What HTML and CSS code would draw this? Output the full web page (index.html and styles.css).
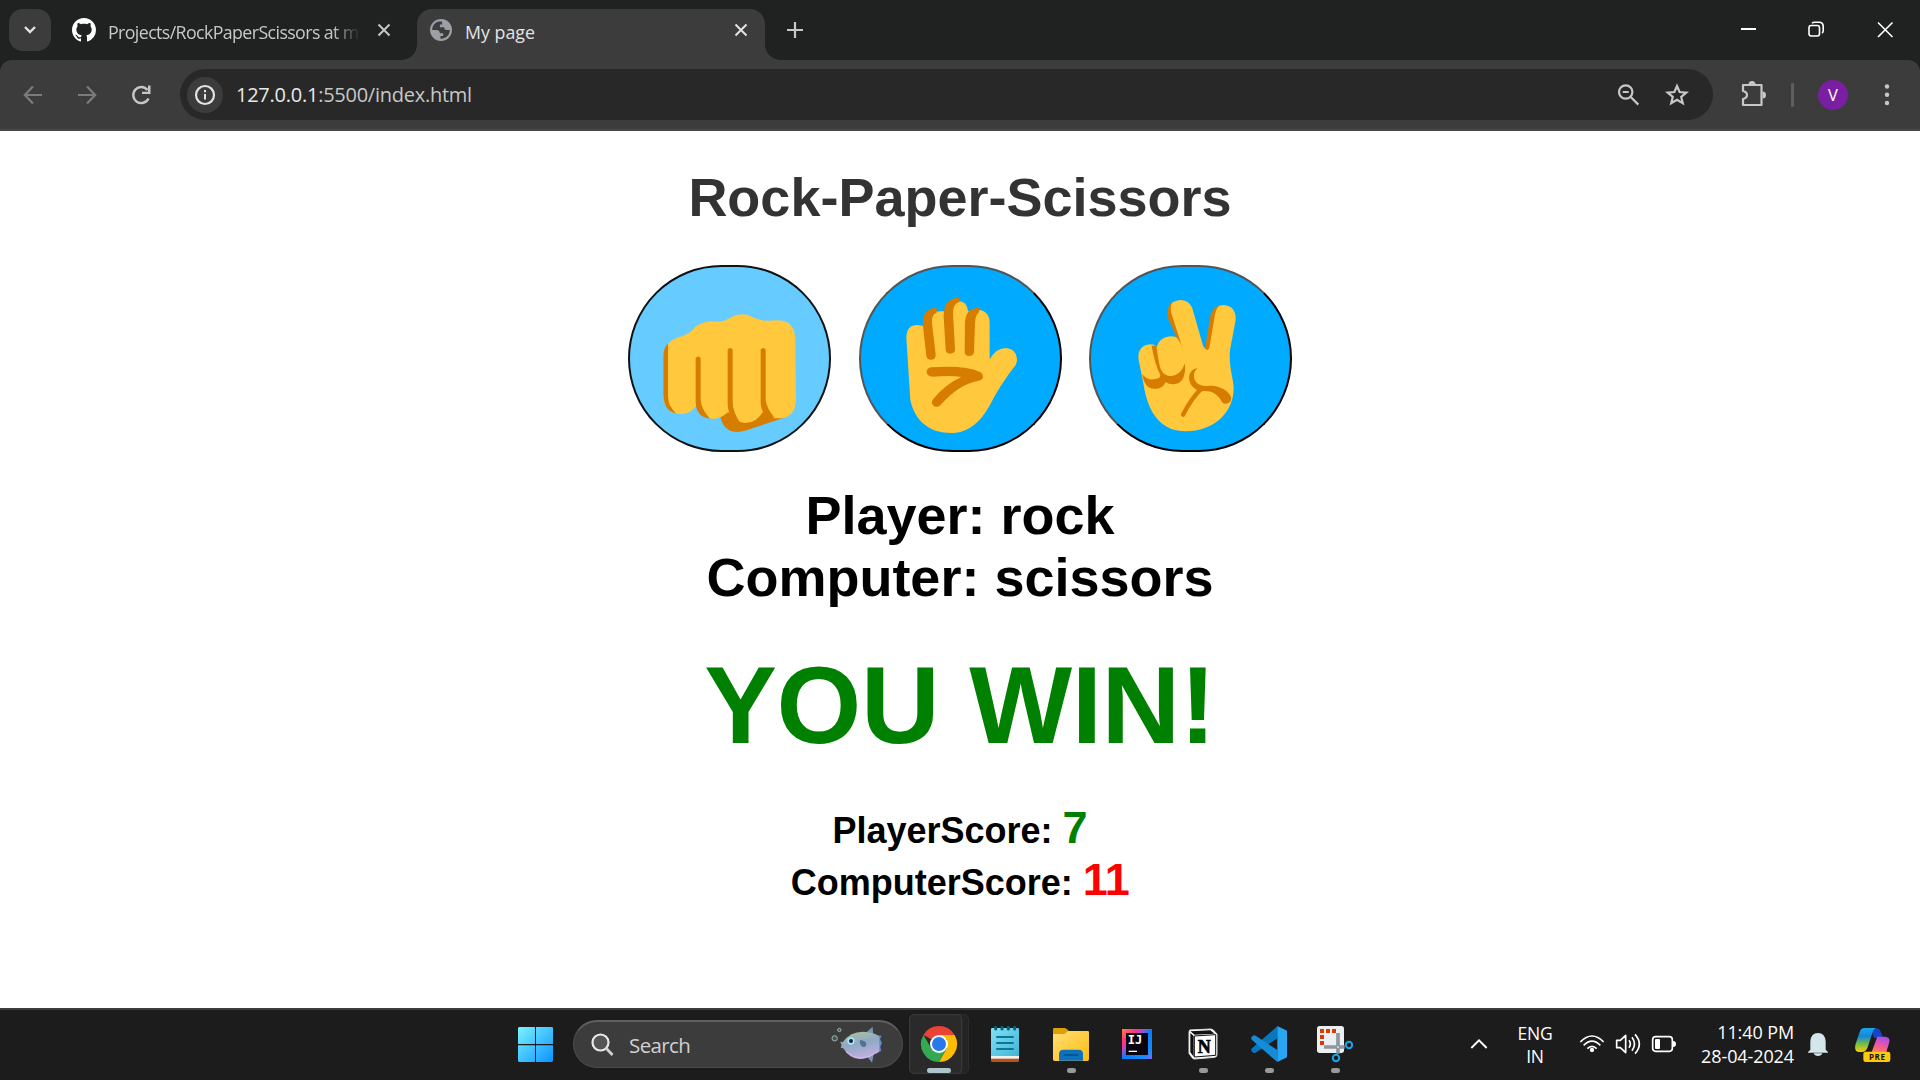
FILE: index.html
```html
<!DOCTYPE html>
<html lang="en">
<head>
<meta charset="utf-8">
<title>My page</title>
<link rel="stylesheet" href="styles.css">
</head>
<body>
<header class="tabstrip">
  <div class="tab-search"><svg width="14" height="10" viewBox="0 0 14 10"><path d="M2 2l5 5 5-5" fill="none" stroke="#e3e3e3" stroke-width="2.4"/></svg></div>
  <svg class="github" width="24" height="24" viewBox="0 0 16 16"><path fill="#fff" d="M8 0C3.58 0 0 3.58 0 8c0 3.54 2.29 6.53 5.47 7.59.4.07.55-.17.55-.38 0-.19-.01-.82-.01-1.49-2.01.37-2.53-.49-2.69-.94-.09-.23-.48-.94-.82-1.13-.28-.15-.68-.52-.01-.53.63-.01 1.08.58 1.23.82.72 1.21 1.87.87 2.33.66.07-.52.28-.87.51-1.07-1.78-.2-3.64-.89-3.64-3.95 0-.87.31-1.59.82-2.15-.08-.2-.36-1.02.08-2.12 0 0 .67-.21 2.2.82.64-.18 1.32-.27 2-.27s1.36.09 2 .27c1.53-1.04 2.2-.82 2.2-.82.44 1.1.16 1.92.08 2.12.51.56.82 1.27.82 2.15 0 3.07-1.87 3.75-3.65 3.95.29.25.54.73.54 1.48 0 1.07-.01 1.93-.01 2.2 0 .21.15.46.55.38A8.01 8.01 0 0 0 16 8c0-4.42-3.58-8-8-8z"/></svg>
  <span class="tab-title faded">Projects/RockPaperScissors at m</span>
  <svg class="tab-x" width="14" height="14" viewBox="0 0 14 14"><path d="M1.5 1.5l11 11M12.500 1.500l-11 11" stroke="#c7c7c7" stroke-width="2"/></svg>
  <div class="tab-active">
    <svg width="22" height="22" viewBox="2 2 20 20"><circle cx="12" cy="12" r="10" fill="#9aa0a6"/><path fill="#3c3c3c" d="M10 4.200C6.500 5 4 8.200 4 12h3.500c2 0 3.500 1 3.500 3h3v2.500h-2.500v2.400c4.500.3 8.500-3.200 8.500-7.900h-3c-1.600 0-2-1-2-2.500h-4V7h2V4.200z"/></svg>
    <span class="tab-title current">My page</span>
    <svg class="end" width="14" height="14" viewBox="0 0 14 14"><path d="M1.500 1.500l11 11M12.500 1.500l-11 11" stroke="#e3e3e3" stroke-width="2"/></svg>
  </div>
  <svg class="newtab" width="16" height="16" viewBox="0 0 16 16"><path d="M8 0v16M0 8h16" stroke="#c7c7c7" stroke-width="2.200"/></svg>
  <div class="window-controls">
    <svg width="68" height="60" viewBox="0 0 68 60"><path d="M27 29h15" stroke="#fff" stroke-width="2"/></svg>
    <svg width="69" height="60" viewBox="0 0 69 60"><g fill="none" stroke="#fff" stroke-width="1.600"><rect x="27" y="25.500" width="10.500" height="10.500" rx="2.200"/><path d="M30 23.200q1-1 2.600-1h4.400q4.200 0 4.200 4.200v4.200q0 1.800-1.200 2.600"/></g></svg>
    <svg width="69" height="60" viewBox="0 0 69 60"><path d="M27 22.500l14.500 14.500M41.500 22.500L27 37" stroke="#fff" stroke-width="1.600"/></svg>
  </div>
</header>
<nav class="toolbar">
  <svg width="54" height="54" viewBox="0 0 54 54"><path d="M36 27H19M27 18.500L18.800 27l8.200 8.500" fill="none" stroke="#7b7b7b" stroke-width="2.200"/></svg>
  <svg width="54" height="54" viewBox="0 0 54 54"><path d="M18 27h17M27 18.500l8.200 8.500-8.200 8.500" fill="none" stroke="#7b7b7b" stroke-width="2.200"/></svg>
  <svg width="54" height="54" viewBox="0 0 54 54"><path d="M34.500 30.500a8 8 0 1 1-1-8.500" fill="none" stroke="#c7c7c7" stroke-width="2.400"/><path d="M36.500 17.500v8.500H28v-2.300h6v-6.200z" fill="#c7c7c7"/></svg>
  <div class="omnibox">
    <span class="site-info"><svg width="22" height="22" viewBox="0 0 22 22"><circle cx="11" cy="11" r="9" fill="none" stroke="#e3e3e3" stroke-width="2.200"/><path d="M11 10v5.500M11 6v2.200" stroke="#e3e3e3" stroke-width="2"/></svg></span>
    <span class="url"><span class="host">127.0.0.1</span>:5500/index.html</span>
    <svg class="mag" width="24" height="24" viewBox="0 0 24 24"><g fill="none" stroke="#c7c7c7" stroke-width="2.200"><circle cx="9.700" cy="9" r="6.700"/><path d="M14.500 13.800l7.800 7.800M6.700 9h6"/></g></svg>
    <svg class="star" width="26" height="26" viewBox="0 0 26 26"><path d="M13 4l2.600 6 6.700.6-5.100 4.300 1.600 6.400-5.800-3.500-5.800 3.500 1.600-6.400-5.100-4.300 6.700-.6z" fill="none" stroke="#c7c7c7" stroke-width="2.200"/></svg>
  </div>
  <svg class="puzzle" width="54" height="54" viewBox="0 0 54 54"><path d="M17 17h18.500v20H17v-6q4-1 4-4t-4-4z" fill="none" stroke="#c7c7c7" stroke-width="2.200" stroke-linejoin="round"/><path d="M22.500 16.500a3.500 3.500 0 0 1 7 0zM36.500 23.500a3.500 3.500 0 0 1 0 7z" fill="#c7c7c7"/></svg>
  <span class="divider"></span>
  <span class="avatar">V</span>
  <svg class="menu" width="54" height="54" viewBox="0 0 54 54"><g fill="#c7c7c7"><circle cx="27" cy="18.500" r="2.200"/><circle cx="27" cy="26.800" r="2.200"/><circle cx="27" cy="35" r="2.200"/></g></svg>
</nav>
<main class="game">
  <h1>Rock-Paper-Scissors</h1>
  <div class="choices">
    <button class="choice hovered"><svg width="203" height="187" viewBox="54 45 609 561">
      <path fill="#d67d00" d="M331 500Q340 546 385 546L405 542 520 504 460 478 345 478z"/>
      <path fill="#ffc83d" d="M160 320Q160 278 205 262 232 255 248 240 265 217 302 214C330 216 342 215 360 203Q395 183 430 202 446 213 475 212L505 211Q553 213 556 265L558 445Q558 503 510 505L490 505 461 482Q440 519 405 519 380 519 355 486 330 507 310 507 278 502 258 469 240 492 215 492 162 490 160 440z"/>
      <path fill="#d67d00" d="M174 280V440Q176 470 198 489 162 485 160 435V320Q160 295 174 280zM257 325a8 8 0 0 1 15 0V450Q275 480 300 506 257 500 257 455zM353 299a8 8 0 0 1 15 0V455Q368 485 390 518 353 505 353 460zM452 299a8 8 0 0 1 15 0V450Q470 475 494 504 452 500 452 455z"/>
    </svg></button>
    <button class="choice"><svg width="203" height="187" viewBox="27 45 609 561">
      <path fill="#ffc83d" d="M169 264Q169 225 202 225L222 228 240 190Q255 182 283 184L310 155Q350 145 354 184L385 180Q419 182 419 220V328Q438 294 468 294 501 297 501 332 500 345 490 354 451 405 425 455C395 515 355 549 303 549 240 549 195 515 181 450 172 380 169 264z"/>
      <path fill="#d67d00" d="M229 318L219 228Q215 174 260 174V188Q244 193 246 220L257 314Q257 329 243 329 231 329 229 318zM287 300L281 200Q280 143 328 143V156Q309 161 309 190L315 298Q315 311 301 311 288 311 287 300zM344 306L345 215Q348 173 387 173V187Q376 193 375 220L372 306Q370 318 358 318 344 318 344 306zM244 352Q345 345 388 365 400 370 399 382 396 392 382 393 325 404 271 466 262 474 252 468 241 460 249 448 285 403 334 381 305 375 247 380 231 378 230 367 230 354 244 352z"/>
    </svg></button>
    <button class="choice"><svg width="203" height="187" viewBox="27 45 609 561">
      <path fill="#ffc83d" d="M175 325Q174 286 210 283 224 283 231 290C236 262 275 250 295 265L266 205Q256 155 300 150 327 150 337 175L370 290 378 298 395 195Q402 165 430 165 469 168 467 210L450 300C445 350 461 385 461 415C461 490 400 544 317 544 250 544 205 500 190 400z"/>
      <path fill="#d67d00" d="M279 154Q265 170 279 205L310 302Q304 280 290 262L264 205Q257 170 279 154zM418 167Q406 177 403 205L388 295Q381 305 375 294L391 198Q396 172 418 167zM215 288L229 286Q236 340 240 350C246 372 260 378 275 378Q302 376 315 340C318 378 307 401 285 402Q270 405 257 396C250 413 235 417 220 416 200 415 190 395 187 372Q200 391 222 388 241 386 241 375 225 345 215 288zM352 354Q337 370 344 390 354 409 383 408C415 402 452 425 454 445 452 465 430 463 426 456 410 428 390 421 365 424L350 420Q327 405 327 384 327 359 352 354z"/>
      <path fill="none" stroke="#d67d00" stroke-width="13" stroke-linecap="round" d="M309 494Q333 448 362 418"/>
    </svg></button>
  </div>
  <div class="pick">Player: rock</div>
  <div class="pick">Computer: scissors</div>
  <div class="result">YOU WIN!</div>
  <div class="score">PlayerScore: <span class="num player">7</span></div>
  <div class="score">ComputerScore: <span class="num computer">11</span></div>
</main>
<footer class="taskbar">
  <svg class="start" width="35" height="70" viewBox="54 30 105 210"><defs><linearGradient id="win" x1="54" y1="81" x2="159" y2="186" gradientUnits="userSpaceOnUse"><stop stop-color="#7cf3ff"/><stop offset="1" stop-color="#0a93ff"/></linearGradient></defs><path fill="url(#win)" d="M57 81h48v51H54V84zM108 81h48q3 0 3 3v48h-51zM54 136h51v50H57l-3-3zM108 136h51v47l-3 3h-48z"/></svg>
  <div class="search">
    <svg width="23" height="24" viewBox="0 0 23 24"><circle cx="9.500" cy="9.500" r="8" fill="#555" stroke="#e8e8e8" stroke-width="2.200"/><path d="M15 15l6.500 7" stroke="#d0d0d0" stroke-width="2.800"/></svg>
    <span class="search-label">Search</span>
    <svg class="fish" width="52" height="40" viewBox="995 75 156 120"><defs><linearGradient id="fish" x1="0" y1="0" x2="0.300" y2="1"><stop stop-color="#b3c49a"/><stop offset=".5" stop-color="#8ea9c4"/><stop offset="1" stop-color="#bcaede"/></linearGradient></defs><path fill="#7893b5" d="M1098 100l22-20 2 28zM1100 165l18 23 6-28z"/><path fill="#6685c7" d="M1130 105l17 2-5 10 6 12-5 12 3 11-16 10z"/><path fill="url(#fish)" d="M1022 125l8 2Q1055 92 1100 96 1132 99 1140 112V152Q1110 177 1080 177 1050 176 1032 145l-8-2 3-9z"/><path d="M1040 155q45 40 98-2" fill="none" stroke="#dfb6ed" stroke-width="3"/><circle cx="1055" cy="123" r="11" fill="#a6e7ef"/><circle cx="1055" cy="123" r="6" fill="#17204a"/><path d="M1082 120q20 2 19 15-3 9-12 5-10-8-7-20z" fill="#52738f"/><g fill="#485653" stroke="#9bb8ae" stroke-width="3"><circle cx="1006" cy="115" r="8"/><circle cx="1020" cy="90" r="5"/></g></svg>
  </div>
  <svg class="chrome" width="60" height="70" viewBox="27 30 180 210">
    <rect x="120" y="44" width="86" height="176" rx="14" fill="#242424" stroke="#303030" stroke-width="3"/><rect x="29" y="44" width="156" height="176" rx="14" fill="#2a2a2a" stroke="#383838" stroke-width="4"/>
    <path fill="#ea4335" d="M70.200 105A54 54 0 0 1 163.800 105H117L94 118z"/><path fill="#fbbc04" d="M163.800 105A54 54 0 0 1 117 186L140 145 140 118 117 105z"/><path fill="#34a853" d="M117 186A54 54 0 0 1 70.200 105L94 145 117 158 140 145z"/><circle cx="117" cy="132" r="27" fill="#fff"/><circle cx="117" cy="132" r="21" fill="#2878eb"/>
    <rect x="81" y="204" width="72" height="15" rx="7" fill="#afc5cd"/></svg>
  <svg width="66" height="70" viewBox="216 30 198 210"><defs><linearGradient id="note" x1="0" y1="0" x2="1" y2="1"><stop stop-color="#83e0f4"/><stop offset="1" stop-color="#42b5d5"/></linearGradient></defs><path fill="#b55513" d="M273 170h84v12q0 4-4 4h-76q-4 0-4-4z"/><path fill="#f0f0f0" d="M273 164h84v12h-84z"/><path fill="url(#note)" d="M277 84h76q4 0 4 4v80h-84V88q0-4 4-4z"/><path stroke="#08779c" stroke-width="6" stroke-linecap="round" d="M291 111h48M291 129h48M291 147h48"/><path stroke="#076080" stroke-width="9" stroke-linecap="round" d="M287 82v5M306 82v5M325 82v5M344 82v5"/></svg>
  <svg width="66" height="70" viewBox="414 30 198 210"><defs><linearGradient id="folder" x1="0" y1="0" x2="1" y2="1"><stop stop-color="#ffdf72"/><stop offset="1" stop-color="#fdbd16"/></linearGradient></defs><path fill="#dda006" d="M463 84h31q5 0 12 8l1 15h-48V88q0-4 4-4z"/><path fill="url(#folder)" d="M459 102h34l12-9h58q4 0 4 4v81q0 5-5 5h-98q-5 0-5-5z"/><path fill="#0c72bd" d="M477 182v-20q0-13 14-13h44q14 0 14 13v20z"/><path stroke="#07477f" stroke-width="4" d="M491 165h44"/><rect x="501" y="204" width="27" height="15" rx="7" fill="#999"/></svg>
  <svg width="66" height="70" viewBox="612 30 198 210"><defs><linearGradient id="ij" x1="0" y1="0" x2="1" y2="1"><stop stop-color="#fb8540"/><stop offset=".25" stop-color="#ff318c"/><stop offset=".38" stop-color="#a050d0"/><stop offset=".5" stop-color="#087cfa"/><stop offset=".85" stop-color="#168cff"/><stop offset="1" stop-color="#a05cff"/></linearGradient></defs><rect x="666" y="87" width="90" height="90" fill="url(#ij)"/><rect x="678" y="99" width="66" height="66" fill="#08030e"/><text x="683" y="132" class="ij">IJ</text><path stroke="#fff" stroke-width="4" d="M686 154h25"/></svg>
  <svg width="66" height="70" viewBox="810 30 198 210"><path fill="#fff" stroke="#ddd" stroke-width="3" d="M869 90l62-3q6 0 10 4l10 11v62q0 7-7 8l-60 5q-5 0-8-4l-9-13V96z"/><path fill="#111" d="M871 94l60-3 13 10-60 3zM871 99l10 9v62l-10-13z"/><path fill="#fff" stroke="#111" stroke-width="3" d="M883 108l64-4v62l-64 5z"/><text x="893" y="160" class="notion">N</text><rect x="897" y="204" width="27" height="15" rx="7" fill="#999"/></svg>
  <svg width="66" height="70" viewBox="1008 30 198 210"><path fill="#0878be" d="M1132 79v36L1067 158q-5 3-10-2-7-7 0-12z"/><path fill="#168bd7" d="M1132 186v-36L1067 107q-5-3-10 2-7 6 0 12z"/><path fill="#2aa5f2" d="M1132 78l29 14v80l-29 14z"/><rect x="1095" y="204" width="27" height="15" rx="7" fill="#999"/></svg>
  <svg width="66" height="70" viewBox="1206 30 198 210"><rect x="1251" y="78" width="81" height="81" rx="8" fill="#eceff2"/><g fill="#d83b01"><path d="M1260 87h12v12h-12zM1278 87h12v12h-12zM1296 87h12v12h-12zM1260 105h12v12h-12zM1260 123h12v12h-12z"/></g><path d="M1272 141h62M1314 99v62" stroke="#8d979f" stroke-width="11"/><circle cx="1314" cy="141" r="3" fill="#ddd"/><g fill="none" stroke="#1ca2e9" stroke-width="6"><circle cx="1347" cy="135" r="9.500"/><circle cx="1308" cy="174" r="9.500"/></g><rect x="1293" y="204" width="27" height="15" rx="7" fill="#999"/></svg>
  <div class="tray">
    <svg width="30" height="70" viewBox="72 30 90 210"><path d="M94 144l23-23 23 23" fill="none" stroke="#fff" stroke-width="5.500"/></svg>
    <div class="lang"><span>ENG</span><span>IN</span></div>
    <svg width="108" height="70" viewBox="411 30 324 210"><g fill="none" stroke="#fff" stroke-width="5"><path d="M424 126q35-36 70 0M434 136q25-25 50 0M445 146q14-14 28 0"/><path d="M533 121v22h11l16 15v-52l-16 15z" stroke-linejoin="round"/><path d="M570 121q8 10 0 22M579 112q15 20 0 40M588 103q26 29 0 58"/><rect x="641" y="110" width="59" height="44" rx="9"/></g><circle cx="459" cy="150" r="6.500" fill="#fff"/><rect x="648" y="117" width="15" height="30" rx="3" fill="#fff"/><path d="M702 123q9 0 9 9t-9 9z" fill="#fff"/></svg>
    <div class="clock"><span>11:40 PM</span><span>28-04-2024</span></div>
    <svg class="bell" width="22" height="70" viewBox="1101 30 66 210"><path fill="#d3e6ea" d="M1111 149V124q2-25 23-25t23 25v25l7 7v2h-60v-2zM1121 160h26q-3 8-13 8t-13-8z"/></svg>
    <svg class="copilot" width="36" height="70" viewBox="1244 30 108 210"><defs><linearGradient id="cop" x1="0" y1="0" x2="0" y2="1"><stop stop-color="#18a5ef"/><stop offset=".35" stop-color="#1687d8"/><stop offset=".65" stop-color="#6ebc4b"/><stop offset="1" stop-color="#ffd000"/></linearGradient><linearGradient id="cop2" x1=".6" y1="0" x2=".3" y2="1"><stop stop-color="#a64df4"/><stop offset=".5" stop-color="#ed579e"/><stop offset="1" stop-color="#ff8055"/></linearGradient></defs><path fill="#1645c7" d="M1290 85h18q10 0 14 12l5 13-25 5z"/><path fill="url(#cop)" d="M1272 84h35q-7 2-11 15l-14 43q-5 14-17 14h-10q-15-2-9-25l12-35q4-12 14-12z"/><path fill="url(#cop2)" d="M1311 110h24q17 2 11 20l-9 29h-44z"/><rect x="1269" y="155" width="81" height="31" rx="7" fill="#ffc80a"/><text x="1311" y="180" class="pre">PRE</text></svg>
  </div>
</footer>
</body>
</html>
```
FILE: styles.css
```css
* { box-sizing: border-box; }
body { margin: 0; width: 1920px; height: 1080px; overflow: hidden; display: flex; flex-direction: column; background: #202221; font-family: "Open Sans", sans-serif; }
svg { display: block; flex: none; }
.tabstrip { height: 60px; display: flex; align-items: center; padding-left: 9px; flex: none; }
.tab-search { width: 42px; height: 42px; border-radius: 14px; background: #3c3c3c; display: flex; align-items: center; justify-content: center; }
.github { margin-left: 21px; }
.tab-title { font-size: 17.8px; line-height: 24px; white-space: nowrap; color: #c7c7c7; padding-top: 3px; }
.faded { width: 252px; margin-left: 12px; letter-spacing: -0.6px; -webkit-mask-image: linear-gradient(90deg, #000 225px, transparent 252px); mask-image: linear-gradient(90deg, #000 225px, transparent 252px); }
.tab-x { margin-left: 17px; }
.tab-active { position: relative; margin-left: 26px; width: 348px; height: 51px; align-self: flex-end; background: #3c3c3c; border-radius: 15px 15px 0 0; display: flex; align-items: center; padding: 0 17px 9px 13px; }
.tab-active::before, .tab-active::after { content: ""; position: absolute; bottom: 0; width: 15px; height: 15px; }
.tab-active::before { left: -15px; background: radial-gradient(circle at 0 0, transparent 14.5px, #3c3c3c 15px); }
.tab-active::after { right: -15px; background: radial-gradient(circle at 100% 0, transparent 14.5px, #3c3c3c 15px); }
.current { color: #e3e3e3; margin-left: 13px; }
.end { margin-left: auto; }
.newtab { margin-left: 22px; }
.window-controls { margin-left: auto; display: flex; }
.toolbar { height: 71px; flex: none; display: flex; align-items: center; background: #3c3c3c; border-bottom: 2px solid #474747; border-radius: 12px 12px 0 0; padding-left: 6px; }
.omnibox { width: 1533px; height: 51px; margin-left: 12px; border-radius: 26px; background: #282828; display: flex; align-items: center; padding-left: 7px; flex: none; }
.site-info { width: 36px; height: 36px; border-radius: 50%; background: #3c3c3c; display: flex; align-items: center; justify-content: center; }
.url { margin-left: 13px; font-size: 20px; line-height: 27px; padding-bottom: 1px; color: #c7c7c7; letter-spacing: -0.25px; }
.host { color: #e8e8e8; }
.mag { margin-left: auto; margin-right: 24px; }
.star { margin-right: 23px; }
.puzzle { margin-left: 13px; }
.divider { width: 3px; height: 24px; margin-left: 11px; background: #5e5e5e; border-radius: 1px; }
.avatar { width: 30px; height: 30px; margin-left: 24px; border-radius: 50%; background: #7b1fa2; color: #fff; font-size: 16.5px; line-height: 30px; text-align: center; }
.menu { margin-left: 12px; }

.game { flex: 1; background: #fff; display: flex; flex-direction: column; align-items: center; font-family: "Liberation Sans", Arial, sans-serif; font-weight: bold; color: #000; }
h1 { margin: 35px 0 37px; font-size: 54px; line-height: 62px; color: #333; }
.choices { display: flex; gap: 27.5px; margin-bottom: 32px; height: 187px; }
.choice { width: 203px; height: 187px; padding: 0; border: 2px outset #000; border-radius: 225px; background: #0af; display: flex; align-items: center; justify-content: center; }
.hovered { background: #6cf; border: 2px solid #111; }
.pick { font-size: 54px; line-height: 62px; }
.result { font-size: 109px; line-height: 124px; margin: 35px 0; color: green; letter-spacing: -0.4px; }
.score { font-size: 36px; line-height: 52px; height: 52px; }
.num { font-size: 45px; }
.player { color: green; }
.computer { color: red; letter-spacing: -0.6px; }

.taskbar { height: 72px; flex: none; border-top: 2px solid #3c3c3c; background: #1c1c1c; display: flex; padding-left: 518px; }
.search { width: 330px; height: 48px; margin: 10px 6px 0 20px; border: 1px solid #4c4c4c; border-top: 2px solid #606060; border-radius: 24px; background: #3c3c3c; display: flex; align-items: center; padding: 0 19px 0 17px; flex: none; }
.search-label { margin-left: 15px; font-size: 20.5px; color: #d0d0d0; letter-spacing: -0.6px; }
.fish { margin-left: auto; }
.chrome { margin-right: 3px; }
.ij { font: bold 36px "DejaVu Sans Mono", monospace; fill: #fff; }
.notion { font: bold 54px "Liberation Serif", serif; fill: #000; stroke: #000; stroke-width: 2px; }
.tray { display: flex; margin-left: 96px; color: #fff; font-size: 17.5px; line-height: 23px; }
.lang { display: flex; flex-direction: column; align-items: center; width: 82px; padding-top: 12px; letter-spacing: -0.2px; }
.clock { display: flex; flex-direction: column; align-items: flex-end; width: 110px; padding-top: 10px; font-size: 18px; line-height: 24px; letter-spacing: -0.1px; white-space: nowrap; }
.bell { margin-left: 13px; }
.copilot { margin-left: 26px; }
.pre { font: bold 24px "Open Sans", sans-serif; fill: #111; text-anchor: middle; letter-spacing: 2px; }
```
